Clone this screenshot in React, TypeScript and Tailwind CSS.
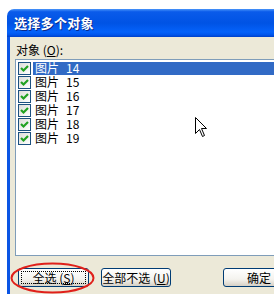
import React from "react";

const rows = ["14", "15", "16", "17", "18", "19"];

function Check() {
  return (
    <div className="w-[13px] h-[13px] border border-[#1c5180] bg-[linear-gradient(135deg,#dcdcd7_0%,#ffffff_100%)] flex items-center justify-center shrink-0">
      <svg width="11" height="11" viewBox="0 0 11 11">
        <polyline points="2,5 4.5,7.5 9,3" fill="none" stroke="#21a121" strokeWidth="2.2" />
      </svg>
    </div>
  );
}

export default function App() {
  return (
    <div
      className="w-[274px] h-[294px] bg-white overflow-hidden relative text-[12px] text-black"
      style={{ fontFamily: '"Noto Sans CJK SC", "Noto Sans", sans-serif' }}
    >
      <div className="ml-[7px] mt-[9px] w-[300px]">
        <div className="h-[28px] rounded-tl-[7px] pl-[7px] flex items-center bg-[linear-gradient(180deg,#4a95fa_0%,#0a5bea_10%,#0053e4_50%,#0462fa_82%,#0055ec_92%,#0040c8_100%)]">
          <span className="text-white font-bold text-[13px] leading-[14px] tracking-[0.3px] [text-shadow:1px_1px_0_#0a2a8a]">选择多个对象</span>
        </div>
        <div className="border-l-[3px] border-[#0a55e4] bg-[#ece9d8] h-[257px] pl-[5px] pt-[6px]">
          <div className="ml-[1px] h-[14px] leading-[14px] mb-[2px]">
            对象 (<span className="underline">O</span>):
          </div>
          <div className="h-[197px] border border-[#7f9db9] bg-white pt-[1px] pl-[2px]">
            {rows.map((n, i) => (
              <div key={n} className="h-[14px] flex items-center">
                <Check />
                <div
                  className={
                    "ml-[2px] h-[13px] flex-1 flex items-center pl-[2px] leading-[12px] " +
                    (i === 0 ? "bg-[#316ac5] text-white" : "")
                  }
                >
                  <span className="leading-[12px]">图片</span>
                  <span className="ml-[7px] leading-[12px]">{n}</span>
                </div>
              </div>
            ))}
          </div>
          <div className="mt-[12px] flex">
            <div className="ml-[3px] w-[71px] h-[19px] border border-[#003c74] rounded-[3px] bg-[linear-gradient(180deg,#ffffff_0%,#f4f3ee_60%,#d6d0c5_100%)] p-[2px] flex">
              <div className="flex-1 border border-dotted border-black flex items-center justify-center leading-[12px]">
                全选 (<span className="underline">S</span>)
              </div>
            </div>
            <div className="ml-[12px] w-[70px] h-[19px] border border-[#003c74] rounded-[3px] bg-[linear-gradient(180deg,#ffffff_0%,#f4f3ee_60%,#d6d0c5_100%)] flex items-center justify-center leading-[12px]">
              全部不选 (<span className="underline">U</span>)
            </div>
            <div className="ml-[52px] w-[72px] h-[19px] border border-[#003c74] rounded-[3px] bg-[linear-gradient(180deg,#ffffff_0%,#f4f3ee_60%,#d6d0c5_100%)] flex items-center justify-center leading-[12px]">
              确定
            </div>
          </div>
        </div>
      </div>
      <svg className="absolute left-0 top-0 pointer-events-none" width="274" height="294">
        <ellipse cx="52.5" cy="278" rx="41" ry="14.5" fill="none" stroke="#e0201a" strokeWidth="2" />
      </svg>
      <svg className="absolute left-[195px] top-[117px]" width="13" height="21" viewBox="0 0 13 21">
        <polygon
          points="0.5,0.5 0.5,16.5 4.5,12.5 7.5,19.5 9.5,18.5 6.5,11.5 11.5,11.5"
          fill="white"
          stroke="black"
          strokeWidth="1"
          strokeLinejoin="miter"
        />
      </svg>
    </div>
  );
}
